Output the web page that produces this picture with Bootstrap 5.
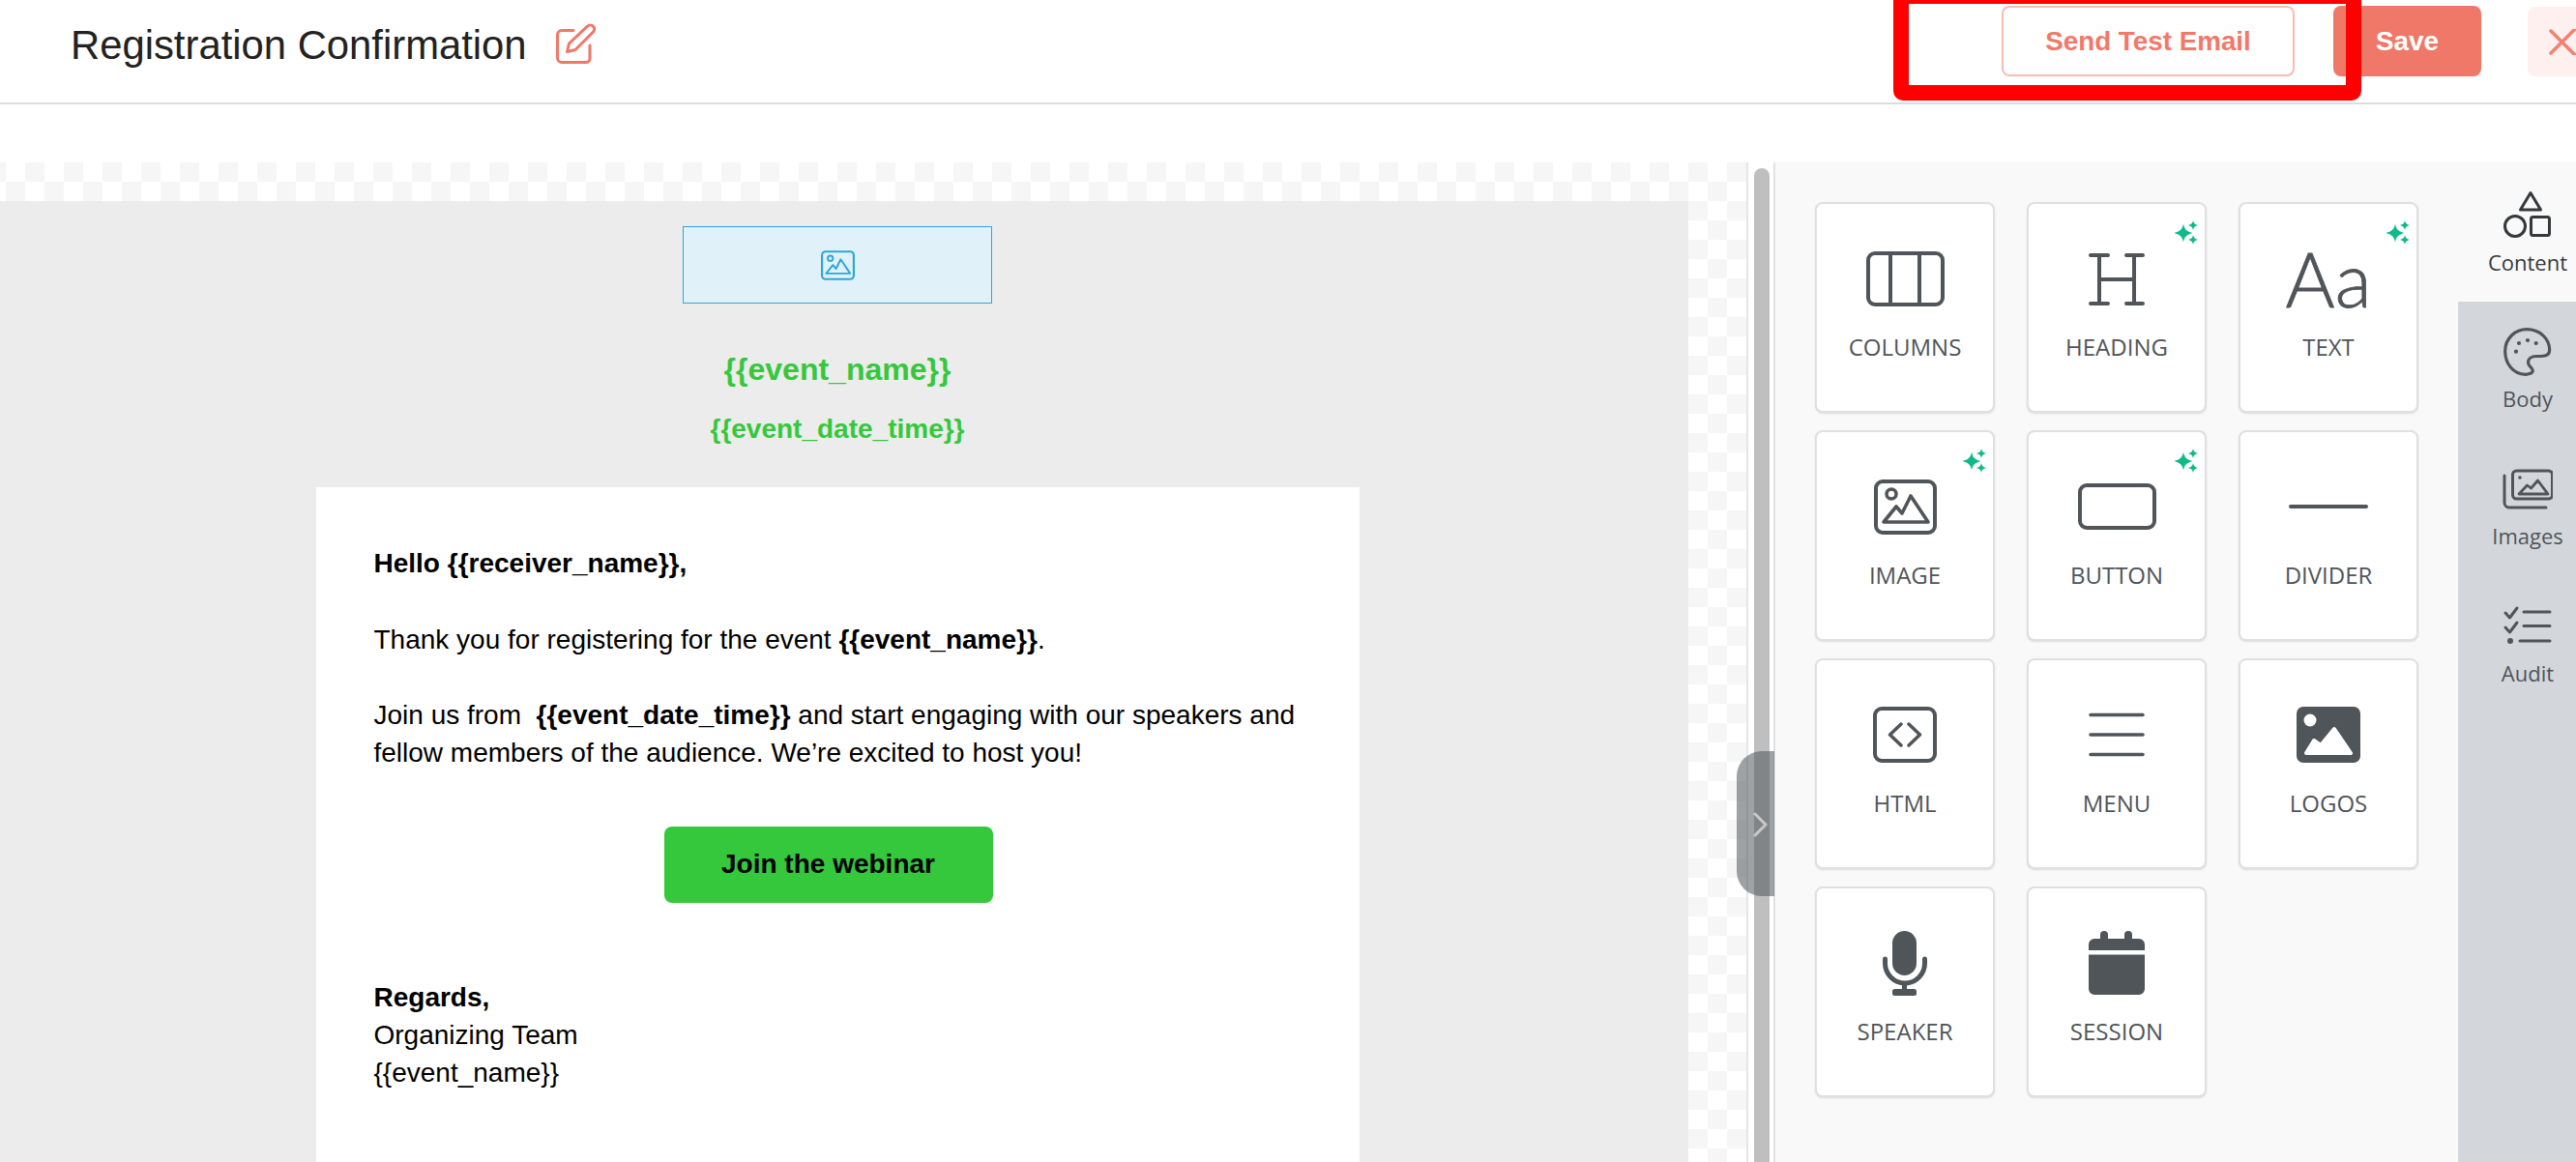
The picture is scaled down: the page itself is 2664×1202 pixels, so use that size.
<!doctype html>
<html lang="en">
<head>
<meta charset="utf-8">
<title>Registration Confirmation</title>
<link href="https://cdn.jsdelivr.net/npm/bootstrap@5.3.0/dist/css/bootstrap.min.css" rel="stylesheet">
<style>
html,body{height:1202px;overflow:hidden;background:#fff}
body{font-family:"Liberation Sans",Arial,sans-serif;position:relative;width:2664px}
.top-bar{height:108px;border-bottom:2px solid #dcdcdc;padding:6px 0 0 73px}
.doc-title{font-size:41.8px;line-height:40px;color:#222;margin:21px 0 0;font-weight:400}
.pen-ico{margin:18px 0 0 28px}
.act-btn{height:73px;border-radius:8px;font-weight:700;font-size:27.8px;padding:0;display:flex;align-items:center;justify-content:center}
.act-send{width:303px;background:#fff;border:2px solid #f9bcb3;color:#f2796a;margin-right:40px}
.act-save{width:153px;background:#f07869;border:0;color:#fff;margin-right:48px}
.act-close{width:50px;background:#fdf0ee;border:0;justify-content:flex-start;padding-left:22px;border-radius:8px 0 0 8px;height:72px;margin-top:1px}
.mark-frame{position:absolute;left:1958px;top:-12px;width:484px;height:116px;border:16px solid #f00;border-radius:10px;pointer-events:none}
.work{margin-top:60px;height:1034px;width:2664px}
.stage{width:1836px;height:1034px;flex:none;position:relative;overflow:hidden;background-color:#fff}
.checker{width:1808px;height:1034px;padding-top:40px;background:conic-gradient(#f6f6f6 25%,#fff 0 50%,#f6f6f6 0 75%,#fff 0) 6px 0/40px 40px;border-right:2px solid #e6e6e6}
.mail{width:1746px;height:994px;overflow:hidden;background:#ececec;padding-right:14px}
.logo-slot{width:320px;height:80px;flex:none;margin-top:26px;background:#e1f1fa;border:1.5px solid #2ba7dc;color:#2ba7dc}
.ev-name{color:#35c83c;font-weight:700;font-size:32px;line-height:40px;margin-top:48px}
.ev-date{color:#35c83c;font-weight:700;font-size:28px;line-height:40px;margin-top:22px;margin-bottom:39.5px}
.mail-body{width:1079px;flex:none;background:#fff;padding:59.5px 60px 0;color:#000;font-size:28px;line-height:39.3px;height:700px}
.mail-body p{margin:0 0 39.3px}
.join{width:340px;height:79px;margin:56px 0 78px 300px;background:#35c83c;color:#000;border:0;border-radius:8px;font-weight:700;font-size:28px;padding:0}
.join:hover{background:#35c83c;color:#000}
.thumb{position:absolute;left:1814px;top:6px;width:16px;height:1028px;background:#bfbfbf;border-radius:8px 8px 0 0}
.rail-line{position:absolute;left:1834px;top:0;width:2px;height:1034px;background:#dfe2e4}
.grab{position:absolute;left:1796px;top:609px;width:39px;height:150px;background:rgba(80,85,90,.55);border-radius:26px 0 0 26px}
.grab svg{position:absolute;left:17px;top:63px}
.side{width:828px;height:1034px;flex:none;background:#f9f9f9;overflow:hidden}
.tiles{width:706px;flex:none;padding:41px 0 0 41px;display:grid;grid-template-columns:repeat(3,186px);grid-auto-rows:218px;column-gap:33px;row-gap:18px;align-content:start}
.tile{position:relative;background:#fff;border:2px solid #e0e0e0;border-radius:8px;box-shadow:0 1px 2px rgba(0,0,0,.12);padding-top:41px;color:#505559}
.tile-ico{height:72px}
.tile-lbl{font-family:"Open Sans",sans-serif;font-size:24px;line-height:32px;margin-top:19px;color:#505559}
.spark{position:absolute;right:7px;top:17px}
.aa{font-family:Lato,sans-serif;font-weight:300;font-size:78px;line-height:72px;color:#505559;-webkit-text-stroke:.8px #505559}
.tabs{width:144px;flex:none;background:#d3d7db}
.tab-item{height:142px;flex:none;padding-top:26px;color:#50555a;font-family:"Open Sans",sans-serif;font-size:22px;line-height:32px}
.tab-item svg{display:block}
.tab-item span{margin-top:6px}
.tab-on{height:144px;padding-top:29px;background:#f9f9f9;color:#36393c}
</style>
</head>
<body>
<svg width="0" height="0" class="position-absolute">
  <defs>
    <symbol id="pic" viewBox="0 0 65 57"><rect x="2" y="2" width="61" height="53" rx="7" fill="none" stroke="currentColor" stroke-width="4"/><circle cx="18" cy="15" r="5" fill="none" stroke="currentColor" stroke-width="3.5"/><path d="M10 44 23 28 29 35 38 17 56 44Z" fill="none" stroke="currentColor" stroke-width="3.6" stroke-linejoin="round"/></symbol>
    <symbol id="sparks" viewBox="0 0 24 25"><path fill="#10b98a" d="M9 3.500C10 8.500 11.500 11 18.500 13 11.500 15 10 17.500 9 22.500 8 17.500 6.500 15 -.5 13 6.500 11 8 8.500 9 3.500Z"/><path fill="#10b98a" d="M19 0C19.600 3 20.800 4.300 24.500 5 20.800 5.700 19.600 7 19 10 18.400 7 17.200 5.700 13.500 5 17.200 4.300 18.400 3 19 0ZM19 15C19.600 18 20.800 19.300 24.500 20 20.800 20.700 19.600 22 19 25 18.400 22 17.200 20.700 13.500 20 17.200 19.300 18.400 18 19 15Z"/></symbol>
  </defs>
</svg>

<header class="top-bar d-flex align-items-start">
  <h1 class="doc-title">Registration Confirmation</h1>
  <svg class="pen-ico" width="44" height="44" viewBox="0 0 44 44" fill="none" stroke="#f07869" stroke-width="3" stroke-linecap="round" stroke-linejoin="round"><path d="M20 7.500H8a4.500 4.500 0 0 0-4.500 4.500v24A4.500 4.500 0 0 0 8 40.500h25a4 4 0 0 0 4-4V23"/><path d="M13.500 29.500 15.500 21 34.500 3.200a3.200 3.200 0 0 1 6 5.800L22 27.500Z"/></svg>
  <div class="ms-auto d-flex">
    <button type="button" class="btn act-btn act-send">Send Test Email</button>
    <button type="button" class="btn act-btn act-save">Save</button>
    <button type="button" class="btn act-btn act-close" aria-label="Close"><svg width="28" height="27" viewBox="0 0 28 27" fill="none" stroke="#f4806f" stroke-width="3.500" stroke-linecap="round"><path d="M2 2 27 27M27 0 2 25"/></svg></button>
  </div>
</header>
<div class="mark-frame"></div>

<main class="work d-flex">
  <section class="stage">
    <div class="checker">
      <div class="mail d-flex flex-column align-items-center">
        <div class="logo-slot d-flex align-items-center justify-content-center"><svg width="35" height="31"><use href="#pic"/></svg></div>
        <div class="ev-name">{{event_name}}</div>
        <div class="ev-date">{{event_date_time}}</div>
        <article class="mail-body">
          <p class="fw-bold">Hello {{receiver_name}},</p>
          <p>Thank you for registering for the event <b>{{event_name}}</b>.</p>
          <p class="mb-0">Join us from&nbsp; <b>{{event_date_time}}</b> and start engaging with our speakers and fellow members of the audience. We’re excited to host you!</p>
          <button type="button" class="btn join d-block">Join the webinar</button>
          <div><b>Regards,</b><br>Organizing Team<br>{{event_name}}</div>
        </article>
      </div>
    </div>
    <div class="thumb"></div>
    <div class="rail-line"></div>
    <div class="grab"><svg width="16" height="26" viewBox="0 0 16 26" fill="none" stroke="#c8c8c8" stroke-width="3" stroke-linecap="round" stroke-linejoin="round"><path d="M2 2 13 13 2 24"/></svg></div>
  </section>

  <aside class="side d-flex">
    <div class="tiles">
      <div class="tile d-flex flex-column align-items-center">
        <div class="tile-ico d-flex align-items-center"><svg width="81" height="57" viewBox="0 0 81 57" fill="none" stroke="currentColor" stroke-width="4"><rect x="2" y="2" width="77" height="53" rx="7"/><path d="M25 2V55M55 2V55"/></svg></div>
        <div class="tile-lbl">COLUMNS</div>
      </div>
      <div class="tile d-flex flex-column align-items-center">
        <svg class="spark" width="24" height="25"><use href="#sparks"/></svg>
        <div class="tile-ico d-flex align-items-center"><svg width="58" height="57" viewBox="0 0 58 57" fill="none" stroke="currentColor" stroke-width="4" stroke-linecap="round"><path d="M2 4H20M39 4H56M2 54H20M39 54H56M11 4V54M47 4V54M11 29H47"/></svg></div>
        <div class="tile-lbl">HEADING</div>
      </div>
      <div class="tile d-flex flex-column align-items-center">
        <svg class="spark" width="24" height="25"><use href="#sparks"/></svg>
        <div class="tile-ico d-flex align-items-center"><span class="aa">Aa</span></div>
        <div class="tile-lbl">TEXT</div>
      </div>
      <div class="tile d-flex flex-column align-items-center">
        <svg class="spark" width="24" height="25"><use href="#sparks"/></svg>
        <div class="tile-ico d-flex align-items-center"><svg width="65" height="57"><use href="#pic"/></svg></div>
        <div class="tile-lbl">IMAGE</div>
      </div>
      <div class="tile d-flex flex-column align-items-center">
        <svg class="spark" width="24" height="25"><use href="#sparks"/></svg>
        <div class="tile-ico d-flex align-items-center"><svg width="81" height="48" viewBox="0 0 81 48" fill="none" stroke="currentColor" stroke-width="4"><rect x="2" y="2" width="77" height="44" rx="7"/></svg></div>
        <div class="tile-lbl">BUTTON</div>
      </div>
      <div class="tile d-flex flex-column align-items-center">
        <div class="tile-ico d-flex align-items-center"><svg width="82" height="6" viewBox="0 0 82 6" fill="none" stroke="currentColor" stroke-width="4" stroke-linecap="round"><path d="M2 3H80"/></svg></div>
        <div class="tile-lbl">DIVIDER</div>
      </div>
      <div class="tile d-flex flex-column align-items-center">
        <div class="tile-ico d-flex align-items-center"><svg width="66" height="58" viewBox="0 0 66 58" fill="none" stroke="currentColor" stroke-width="4" stroke-linecap="round" stroke-linejoin="round"><rect x="2" y="2" width="62" height="54" rx="7"/><path d="M29 18 17.500 29 29 40M37 18 48.500 29 37 40" stroke-width="3.500"/></svg></div>
        <div class="tile-lbl">HTML</div>
      </div>
      <div class="tile d-flex flex-column align-items-center">
        <div class="tile-ico d-flex align-items-center"><svg width="58" height="46" viewBox="0 0 58 46" fill="none" stroke="currentColor" stroke-width="3.600" stroke-linecap="round"><path d="M2 2.500H56M2 23H56M2 43.500H56"/></svg></div>
        <div class="tile-lbl">MENU</div>
      </div>
      <div class="tile d-flex flex-column align-items-center">
        <div class="tile-ico d-flex align-items-center"><svg width="66" height="58" viewBox="0 0 66 58"><rect width="66" height="58" rx="7" fill="currentColor"/><circle cx="14" cy="14" r="6.500" fill="#fff"/><path d="M10 48 18 35 25 40 39 23 56 48Z" fill="#fff" stroke="#fff" stroke-width="4" stroke-linejoin="round"/></svg></div>
        <div class="tile-lbl">LOGOS</div>
      </div>
      <div class="tile d-flex flex-column align-items-center">
        <div class="tile-ico d-flex align-items-center"><svg width="46" height="67" viewBox="0 0 46 67"><rect x="10" width="25" height="46" rx="12.500" fill="currentColor"/><path d="M2.500 29v4.500a20.500 20.500 0 0 0 41 0V29" fill="none" stroke="currentColor" stroke-width="5" stroke-linecap="round"/><rect x="20" y="53" width="5" height="9" fill="currentColor"/><rect x="10" y="60" width="25" height="7" rx="2.500" fill="currentColor"/></svg></div>
        <div class="tile-lbl">SPEAKER</div>
      </div>
      <div class="tile d-flex flex-column align-items-center">
        <div class="tile-ico d-flex align-items-center"><svg width="58" height="66" viewBox="0 0 58 66" fill="currentColor"><rect x="12" width="8" height="14" rx="4"/><rect x="37" width="8" height="14" rx="4"/><path d="M6 8H52a6 6 0 0 1 6 6v6H0v-6a6 6 0 0 1 6-6ZM0 24.500H58V60a6 6 0 0 1-6 6H6a6 6 0 0 1-6-6Z"/></svg></div>
        <div class="tile-lbl">SESSION</div>
      </div>
    </div>

    <nav class="tabs d-flex flex-column">
      <div class="tab-item tab-on d-flex flex-column align-items-center">
        <svg width="52" height="52" viewBox="0 0 52 52" fill="none" stroke="currentColor" stroke-width="3" stroke-linejoin="round"><path d="M29 2.500 18.500 20H39.500Z"/><circle cx="13" cy="37" r="10.500"/><rect x="29.500" y="27.500" width="19" height="19" rx="2"/></svg>
        <span>Content</span>
      </div>
      <div class="tab-item d-flex flex-column align-items-center">
        <svg width="52" height="52" viewBox="0 0 52 52" fill="none" stroke="currentColor" stroke-width="3.200" stroke-linejoin="round"><path d="M23.700 49.300C11 49.300 2.700 38 2.700 25.300 2.700 12 13 2.700 25.300 2.700 38 2.700 48.700 12 48.700 24 48.700 29 45 30.500 40 30.500H35C30 30.500 26.500 33 26.500 37 26.500 41 31.300 42 31.300 45.500 31.300 48 27 49.300 23.700 49.300Z"/><g fill="currentColor" stroke="none"><circle cx="17" cy="17" r="2.100"/><circle cx="26" cy="14" r="2.100"/><circle cx="34.700" cy="17" r="2.100"/><circle cx="14" cy="25.700" r="2.100"/></g></svg>
        <span>Body</span>
      </div>
      <div class="tab-item d-flex flex-column align-items-center">
        <svg width="52" height="52" viewBox="0 0 52 52" fill="none" stroke="currentColor" stroke-width="3" stroke-linecap="round" stroke-linejoin="round"><rect x="10.500" y="7" width="41" height="29" rx="4"/><path d="M2 12V40a5 5 0 0 0 5 5H45"/><path d="M17 31 25.500 22 29.500 25 36.500 17 47 31Z" stroke-width="2.800"/><circle cx="18" cy="14" r="1.800" fill="currentColor" stroke="none"/></svg>
        <span>Images</span>
      </div>
      <div class="tab-item d-flex flex-column align-items-center">
        <svg width="52" height="52" viewBox="0 0 52 52" fill="none" stroke="currentColor" stroke-width="3" stroke-linecap="round" stroke-linejoin="round"><path d="M3 12 7.500 17 15 7M3 27 7.500 32 15 22M22 11H49M22 25.500H49M18 41H49"/><circle cx="8" cy="41" r="3" fill="currentColor" stroke="none"/></svg>
        <span>Audit</span>
      </div>
      <div class="flex-grow-1"></div>
    </nav>
  </aside>
</main>
<script src="https://cdn.jsdelivr.net/npm/bootstrap@5.3.0/dist/js/bootstrap.bundle.min.js"></script>
</body>
</html>
